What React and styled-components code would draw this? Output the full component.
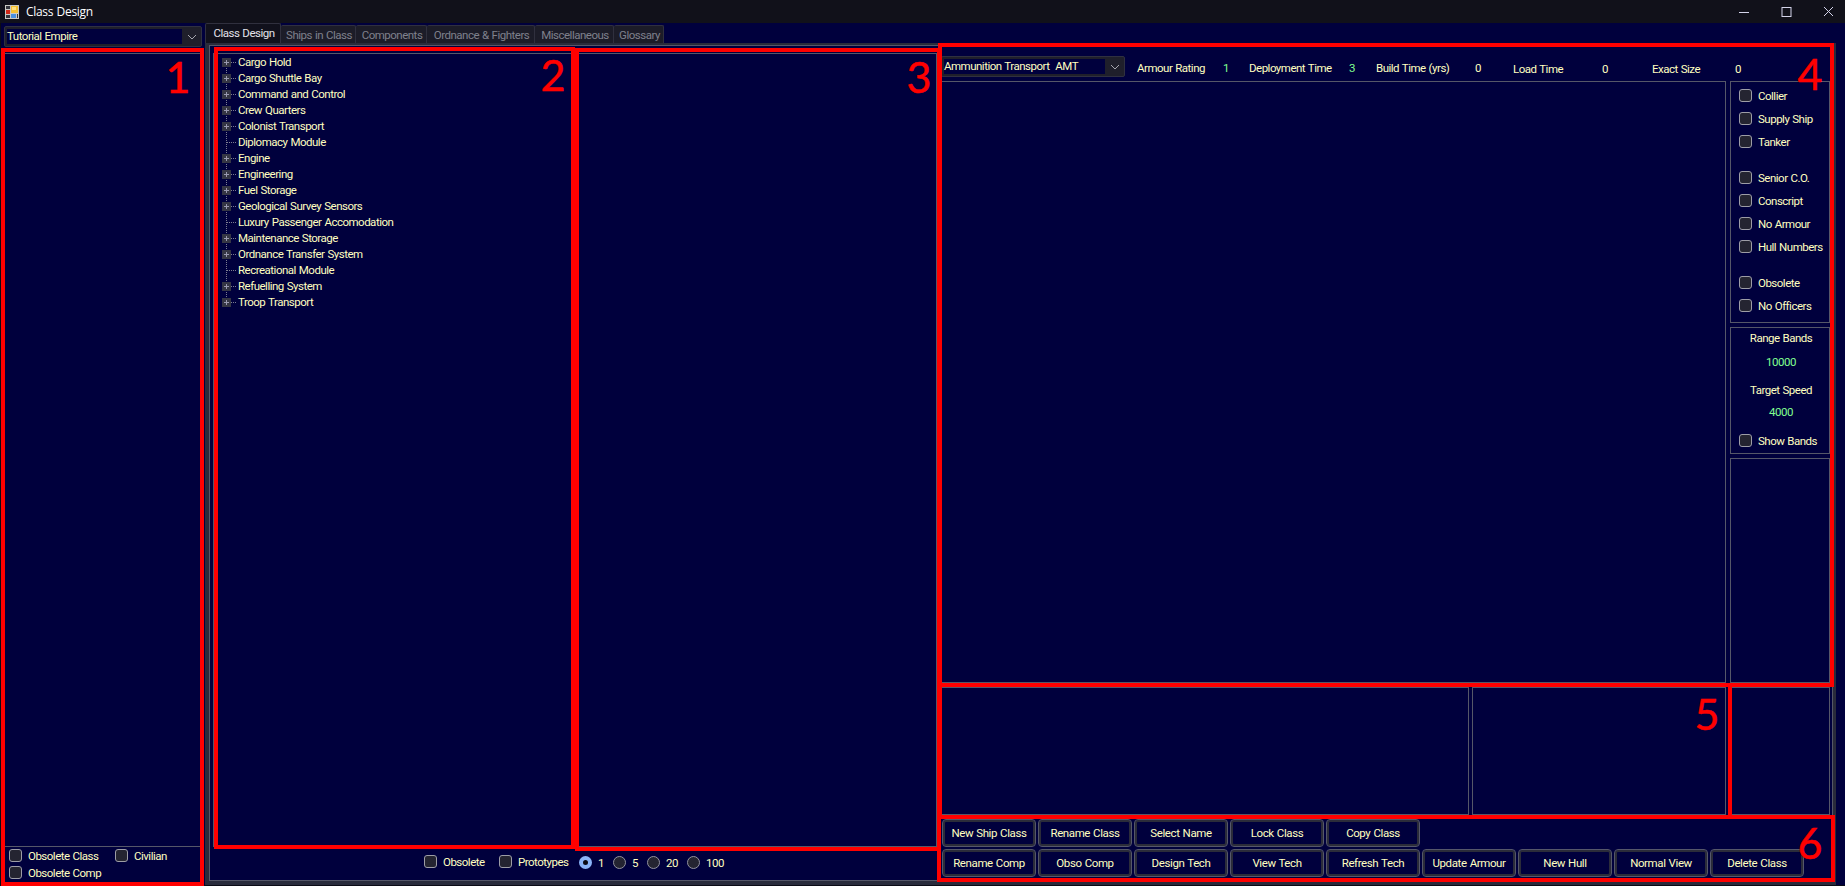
import React from "react";
import styled, { createGlobalStyle } from "styled-components";

const Global = createGlobalStyle`
  * { box-sizing: border-box; }
  body { margin: 0; background: #000040; overflow: hidden; }
`;

const line = "#555768";

const Window = styled.div`
  position: relative;
  width: 1845px;
  height: 886px;
  display: flex;
  flex-direction: column;
  background: #00003d;
  box-shadow: inset 1px -1px #0b0b16;
  color: #ffffc0;
  font-family: Roboto, "Liberation Sans", sans-serif;
  font-size: 11.5px;
  letter-spacing: -0.5px;
  word-spacing: 0.6px;
  line-height: 16px;
  white-space: pre;
  overflow: hidden;
`;

const TitleBar = styled.header`
  height: 23px;
  flex: none;
  display: flex;
  align-items: center;
  background: #11111a;
  color: #fff;
  padding-left: 5px;
  font-family: "Open Sans", "Noto Sans", sans-serif;
  font-size: 12px;
  letter-spacing: -0.3px;
`;
const Title = styled.span`
  margin-left: 7px;
  flex: 1;
  padding-top: 1px;
`;
const WindowControls = styled.div`
  display: flex;
  gap: 31px;
  padding-right: 11px;
`;

const Body = styled.main`
  flex: 1;
  display: flex;
  min-height: 0;
`;

const Sidebar = styled.aside`
  width: 205px;
  display: flex;
  flex-direction: column;
  padding: 3px 2px 0 4px;
`;
const Combo = styled.div`
  width: ${(p) => p.$w}px;
  height: 21px;
  flex: none;
  display: flex;
  align-items: center;
  border: 1px solid #2f3040;
  border-radius: 2px;
  background: #1f1f2b;
  padding-left: 2px;
`;
const ComboText = styled.div`
  flex: 1;
  height: 15px;
  line-height: 14px;
  background: #00003d;
`;
const ComboArrow = styled.div`
  width: 19px;
  display: flex;
  justify-content: center;
`;
const ClassList = styled.div`
  height: 794px;
  margin-top: 6px;
  border: 1px solid ${line};
`;
const SidebarOptions = styled.div`
  display: grid;
  grid-template-columns: 106px auto;
  grid-auto-rows: 17px;
  padding: 0 0 0 5px;
`;

const CheckLabel = styled.label`
  display: flex;
  align-items: center;
  gap: 6px;
  height: ${(p) => p.$h || 17}px;
  margin-top: ${(p) => p.$mt || 0}px;
`;
const CheckBox = styled.span`
  width: 13px;
  height: 13px;
  flex: none;
  border: 1px solid #9d9da6;
  border-radius: 3px;
  background: #242431;
`;
const RadioDot = styled.span`
  width: 13px;
  height: 13px;
  flex: none;
  border-radius: 50%;
  border: ${(p) => (p.$on ? "4px solid #8ab4f8" : "1px solid #92929d")};
  background: ${(p) => (p.$on ? "#0a0a14" : "#242431")};
`;

const TabArea = styled.section`
  width: 1631px;
  display: flex;
  flex-direction: column;
`;
const TabBar = styled.nav`
  height: 20px;
  flex: none;
  display: flex;
  align-items: flex-end;
`;
const Tab = styled.div`
  width: ${(p) => p.$w}px;
  height: ${(p) => (p.$active ? 20 : 18)}px;
  line-height: ${(p) => (p.$active ? 18 : 19)}px;
  padding-left: 2px;
  text-align: center;
  background: ${(p) => (p.$active ? "#11111c" : "#1c1c28")};
  color: ${(p) => (p.$active ? "#e2e2ea" : "#7f808c")};
  border: 1px solid #30303e;
  border-left-width: ${(p) => (p.$active ? 1 : 0)}px;
  border-bottom: 0;
  border-radius: 2px 2px 0 0;
`;
const TabFrame = styled.div`
  height: 842px;
  border: solid #292b3b;
  border-width: 2px 3px 4px 4px;
`;
const TabPage = styled.div`
  height: 100%;
  display: flex;
  border: 1px solid ${line};
  padding: 7px 2px 0 3px;
`;

const Middle = styled.div`
  width: 724px;
  flex: none;
  display: flex;
  flex-direction: column;
`;
const Lists = styled.div`
  height: 794px;
  display: grid;
  grid-template-columns: 361px 359px;
  gap: 4px;
`;
const Pane = styled.div`
  border: 1px solid ${line};
  height: ${(p) => (p.$h ? p.$h + "px" : "auto")};
`;
const Tree = styled.ul`
  list-style: none;
  margin: 0;
  padding: 0 0 0 8px;
`;
const TreeRow = styled.li`
  height: 16px;
  display: flex;
  align-items: center;
`;
const Branch = styled.svg`
  width: 16px;
  height: 16px;
  flex: none;
`;
const ListOptions = styled.div`
  display: flex;
  padding: 6px 0 0 211px;
`;
const Option = styled.div`
  width: ${(p) => p.$w}px;
`;

const Right = styled.div`
  width: 893px;
  flex: none;
  display: flex;
  flex-direction: column;
  padding-left: 4px;
`;
const Stats = styled.div`
  height: 28px;
  flex: none;
  display: flex;
  padding-top: 3px;
`;
const StatList = styled.div`
  display: flex;
  margin-left: 12px;
`;
const Stat = styled.span`
  width: ${(p) => p.$w}px;
  margin-top: ${(p) => p.$mt || 4}px;
  color: ${(p) => (p.$green ? "#80ff90" : "inherit")};
`;
const Upper = styled.div`
  height: 602px;
  display: grid;
  grid-template-columns: 785px 100px;
  gap: 4px;
`;
const Flags = styled.div`
  display: flex;
  flex-direction: column;
  gap: 4px;
`;
const FlagPane = styled(Pane)`
  padding: 2px 0 0 8px;
`;
const Bands = styled(Pane)`
  padding: 2px 0 0 8px;
  display: flex;
  flex-direction: column;
`;
const BandText = styled.div`
  height: ${(p) => p.$h}px;
  padding-right: 6px;
  text-align: center;
  color: ${(p) => (p.$green ? "#80ff90" : "inherit")};
`;
const Lower = styled.div`
  height: 128px;
  margin-top: 4px;
  display: grid;
  grid-template-columns: 528px 254px 101px;
  gap: 3px;
`;
const Buttons = styled.div`
  display: grid;
  grid-template-columns: repeat(9, 94px);
  grid-auto-rows: 28px;
  gap: 2px;
  margin: 4px 0 0 1px;
`;
const Button = styled.button`
  grid-column: ${(p) => p.$col};
  padding: 0;
  border: 1px solid #55576a;
  border-radius: 4px;
  box-shadow: inset 0 0 0 2px #2b2c3a;
  background: #00003d;
  color: inherit;
  font: inherit;
  letter-spacing: -0.4px;
  word-spacing: 0.6px;
`;

const Mark = styled.div`
  position: absolute;
  left: ${(p) => p.$x}px;
  top: ${(p) => p.$y}px;
  width: ${(p) => p.$w}px;
  height: ${(p) => p.$h}px;
  border: 4px solid #f00;
  pointer-events: none;
`;
const MarkNumber = styled.span`
  position: absolute;
  left: ${(p) => p.$x}px;
  top: ${(p) => p.$y}px;
  width: 26px;
  text-align: center;
  color: #f00;
  font: 43px/43px Lato, sans-serif;
  -webkit-text-stroke: 0.5px #f00;
  letter-spacing: 0;
`;

const Chevron = () => (
  <svg width="10" height="6" viewBox="0 0 10 6" fill="none" stroke="#a5a5ae">
    <path d="M1 1l4 4 4-4" />
  </svg>
);

const AppIcon = () => (
  <svg width="14" height="14" viewBox="0 0 14 14">
    <rect width="14" height="14" fill="#c9c9c4" />
    <rect x="1" y="1" width="4" height="3" fill="#33343c" />
    <rect x="1" y="5" width="4" height="4" fill="#d02818" />
    <rect x="1" y="10" width="4" height="3" fill="#33343c" />
    <rect x="6" y="1" width="7" height="7" fill="#f5c030" />
    <rect x="7" y="2" width="4" height="3" fill="#ffe080" />
    <rect x="6" y="9" width="5" height="4" fill="#4a90e0" />
    <rect x="12" y="9" width="1" height="4" fill="#33343c" />
  </svg>
);

const Check = ({ children, ...p }) => (
  <CheckLabel {...p}>
    <CheckBox />
    {children}
  </CheckLabel>
);

const tree = [
  ["Cargo Hold", 1], ["Cargo Shuttle Bay", 1], ["Command and Control", 1], ["Crew Quarters", 1],
  ["Colonist Transport", 1], ["Diplomacy Module", 0], ["Engine", 1], ["Engineering", 1],
  ["Fuel Storage", 1], ["Geological Survey Sensors", 1], ["Luxury Passenger Accomodation", 0],
  ["Maintenance Storage", 1], ["Ordnance Transfer System", 1], ["Recreational Module", 0],
  ["Refuelling System", 1], ["Troop Transport", 1],
];

const TreeItem = ({ label, open, first, last }) => (
  <TreeRow>
    <Branch viewBox="0 0 16 16">
      <path d={`M4.5 ${first ? 8 : 0}V${last ? 8 : 16}M5 8.5H14`} stroke="#7c7d90" strokeDasharray="1 1" />
      {open ? (
        <>
          <rect x="0" y="4" width="9" height="9" fill="#353644" />
          <path d="M2 8.5h5M4.5 6v5" stroke="#9a9ab0" />
        </>
      ) : null}
    </Branch>
    {label}
  </TreeRow>
);

const tabs = [
  ["Class Design", 76], ["Ships in Class", 75], ["Components", 71],
  ["Ordnance & Fighters", 108], ["Miscellaneous", 79], ["Glossary", 50],
];
const stats = [
  ["Armour Rating", 86], ["1", 26, 4, true], ["Deployment Time", 100], ["3", 27, 4, true],
  ["Build Time (yrs)", 99], ["0", 38], ["Load Time", 89, 5], ["0", 50, 5],
  ["Exact Size", 83, 5], ["0", 20, 5],
];
const flags = [
  ["Collier"], ["Supply Ship"], ["Tanker"], ["Senior C.O.", 13], ["Conscript"],
  ["No Armour"], ["Hull Numbers"], ["Obsolete", 13], ["No Officers"],
];
const buttons = [
  ["New Ship Class", "Rename Class", "Select Name", "Lock Class", "Copy Class"],
  ["Rename Comp", "Obso Comp", "Design Tech", "View Tech", "Refresh Tech", "Update Armour", "New Hull", "Normal View", "Delete Class"],
];
const marks = [
  [1, 48, 203, 838], [214, 47, 361, 802], [575, 48, 366, 803],
  [938, 43, 896, 644], [938, 683, 794, 136], [937, 815, 898, 67],
];
const numbers = [[165, 55], [540, 53], [906, 55], [1797, 52], [1694, 692], [1797, 821]];

export default function App() {
  return (
    <Window>
      <Global />
      <TitleBar>
        <AppIcon />
        <Title>Class Design</Title>
        <WindowControls>
          <svg width="11" height="11" stroke="#d4d4ea" fill="none"><path d="M0 6.5h10" /></svg>
          <svg width="11" height="11" stroke="#d4d4ea" fill="none"><rect x="1" y="1.5" width="9" height="9" /></svg>
          <svg width="11" height="11" stroke="#d4d4ea" fill="none"><path d="M1 1l9 9M10 1l-9 9" /></svg>
        </WindowControls>
      </TitleBar>
      <Body>
        <Sidebar>
          <Combo $w={198}>
            <ComboText>Tutorial Empire</ComboText>
            <ComboArrow><Chevron /></ComboArrow>
          </Combo>
          <ClassList />
          <SidebarOptions>
            <Check>Obsolete Class</Check>
            <Check>Civilian</Check>
            <Check>Obsolete Comp</Check>
          </SidebarOptions>
        </Sidebar>
        <TabArea>
          <TabBar>
            {tabs.map(([t, w], i) => <Tab key={t} $w={w} $active={i === 0}>{t}</Tab>)}
          </TabBar>
          <TabFrame>
            <TabPage>
              <Middle>
                <Lists>
                  <Pane>
                    <Tree>
                      {tree.map(([t, o], i) => (
                        <TreeItem key={t} label={t} open={o} first={i === 0} last={i === tree.length - 1} />
                      ))}
                    </Tree>
                  </Pane>
                  <Pane />
                </Lists>
                <ListOptions>
                  <Option $w={75}><Check>Obsolete</Check></Option>
                  <Option $w={80}><Check>Prototypes</Check></Option>
                  {[["1", 34], ["5", 34], ["20", 40], ["100", 50]].map(([t, w], i) => (
                    <Option key={t} $w={w}>
                      <CheckLabel $h={19}><RadioDot $on={i === 0} />{t}</CheckLabel>
                    </Option>
                  ))}
                </ListOptions>
              </Middle>
              <Right>
                <Stats>
                  <Combo $w={184}>
                    <ComboText>{"Ammunition Transport  AMT"}</ComboText>
                    <ComboArrow><Chevron /></ComboArrow>
                  </Combo>
                  <StatList>
                    {stats.map(([t, w, mt, green], i) => (
                      <Stat key={i} $w={w} $mt={mt} $green={green}>{t}</Stat>
                    ))}
                  </StatList>
                </Stats>
                <Upper>
                  <Pane />
                  <Flags>
                    <FlagPane $h={242}>
                      {flags.map(([t, mt]) => <Check key={t} $h={23} $mt={mt}>{t}</Check>)}
                    </FlagPane>
                    <Bands $h={127}>
                      <BandText $h={24}>Range Bands</BandText>
                      <BandText $h={28} $green>10000</BandText>
                      <BandText $h={22}>Target Speed</BandText>
                      <BandText $h={28} $green>4000</BandText>
                      <Check>Show Bands</Check>
                    </Bands>
                    <Pane $h={225} />
                  </Flags>
                </Upper>
                <Lower><Pane /><Pane /><Pane /></Lower>
                <Buttons>
                  {buttons.map((row, r) => row.map((t, c) => (
                    <Button key={r + t} $col={c + 1}>{t}</Button>
                  )))}
                </Buttons>
              </Right>
            </TabPage>
          </TabFrame>
        </TabArea>
      </Body>
      {marks.map(([x, y, w, h], i) => <Mark key={i} $x={x} $y={y} $w={w} $h={h} />)}
      {numbers.map(([x, y], i) => <MarkNumber key={i} $x={x} $y={y}>{i + 1}</MarkNumber>)}
    </Window>
  );
}
